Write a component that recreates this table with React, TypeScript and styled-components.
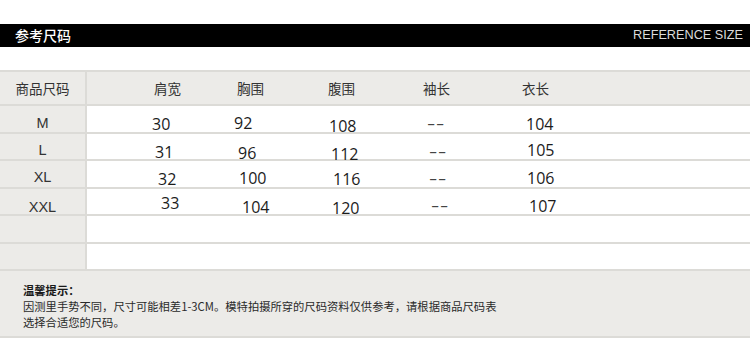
import React from 'react';
import styled, { createGlobalStyle } from 'styled-components';

const GlobalStyle = createGlobalStyle`
  body {
    margin: 0;
    background: #fff;
    font-family: "Noto Sans CJK SC", "Noto Sans", sans-serif;
  }
`;

const LINE = '#dcdbd7';
const PANEL = '#ecebe8';
const CJK = '"Noto Sans CJK SC", "Noto Sans", sans-serif';

const Page = styled.div`
  width: 750px;
  padding-top: 24px;
`;

const TitleBar = styled.div`
  height: 23px;
  background: #000;
  display: flex;
  align-items: center;
  justify-content: space-between;
  padding: 0 7px 0 15px;
`;

const TitleCn = styled.span`
  color: #fff;
  font-family: ${CJK};
  font-size: 14px;
  font-weight: 500;
  line-height: 23px;
`;

const TitleEn = styled.span`
  color: #dcdcdc;
  font-family: "Liberation Sans", Arial, sans-serif;
  font-size: 12.7px;
  line-height: 23px;
`;

const Table = styled.div`
  margin-top: 23px;
  border-top: 2px solid ${LINE};
`;

const Row = styled.div<{ $head?: boolean }>`
  display: flex;
  box-sizing: border-box;
  height: ${p => (p.$head ? '34px' : '27.5px')};
  border-bottom: 2px solid ${LINE};
  background: ${p => (p.$head ? PANEL : '#fff')};
`;

const SizeCell = styled.div<{ $dy?: number; $head?: boolean }>`
  width: 87px;
  flex: none;
  box-sizing: border-box;
  border-right: 2px solid ${LINE};
  background: ${PANEL};
  display: flex;
  align-items: center;
  justify-content: center;
  padding-top: ${p => (p.$dy || 0) * 2}px;
  color: #333;
  font-family: ${p => (p.$head ? CJK : '"Liberation Sans", Arial, sans-serif')};
  font-size: ${p => (p.$head ? '13.5px' : '14.5px')};
  line-height: 20px;
`;

const Cells = styled.div`
  flex: 1;
  display: flex;
  padding-left: 63px;
`;

const Cell = styled.div<{ $w?: number; $dx: number; $dy?: number; $head?: boolean }>`
  ${p => (p.$w ? `width: ${p.$w}px; flex: none;` : 'flex: 1;')}
  box-sizing: border-box;
  display: flex;
  align-items: center;
  padding-left: ${p => p.$dx}px;
  padding-top: ${p => (p.$dy || 0) * 2}px;
  white-space: nowrap;
  line-height: 20px;
  color: ${p => (p.$head ? '#333' : '#1c1c1c')};
  font-family: ${p => (p.$head ? CJK : '"Open Sans", "Noto Sans", sans-serif')};
  font-size: ${p => (p.$head ? '13.5px' : '16px')};
`;

const Dash = styled.span`
  display: inline-block;
  color: #444;
  letter-spacing: 0.5px;
  transform: scaleX(1.6);
  transform-origin: left center;
`;

const Notes = styled.div`
  background: ${PANEL};
  border-bottom: 2px solid ${LINE};
  padding: 11px 0 6px 23px;
  font-family: ${CJK};
  font-size: 11.3px;
  line-height: 16px;
  color: #2a2a2a;
`;

const NotesTitle = styled.div`
  font-weight: 700;
  color: #1a1a1a;
`;

const COL_WIDTHS = [82, 93, 95, 100];

const headers = [
  { label: '肩宽', dx: 4 },
  { label: '胸围', dx: 5 },
  { label: '腹围', dx: 3 },
  { label: '袖长', dx: 3 },
  { label: '衣长', dx: 2 },
];

type Val = { v: string; dx: number; dy: number };

const rows: { size: string; dy: number; cells: Val[] }[] = [
  {
    size: 'M',
    dy: 4,
    cells: [
      { v: '30', dx: 2, dy: 5 },
      { v: '92', dx: 2, dy: 4 },
      { v: '108', dx: 4, dy: 7 },
      { v: '--', dx: 7, dy: 4 },
      { v: '104', dx: 6, dy: 5 },
    ],
  },
  {
    size: 'L',
    dy: 4,
    cells: [
      { v: '31', dx: 5, dy: 6 },
      { v: '96', dx: 6, dy: 7 },
      { v: '112', dx: 6, dy: 8 },
      { v: '--', dx: 9, dy: 5 },
      { v: '105', dx: 7, dy: 4 },
    ],
  },
  {
    size: 'XL',
    dy: 3,
    cells: [
      { v: '32', dx: 8, dy: 5 },
      { v: '100', dx: 7, dy: 4 },
      { v: '116', dx: 8, dy: 5 },
      { v: '--', dx: 9, dy: 4 },
      { v: '106', dx: 7, dy: 4 },
    ],
  },
  {
    size: 'XXL',
    dy: 6,
    cells: [
      { v: '33', dx: 11, dy: 2 },
      { v: '104', dx: 10, dy: 6 },
      { v: '120', dx: 7, dy: 7 },
      { v: '--', dx: 11, dy: 4 },
      { v: '107', dx: 9, dy: 5 },
    ],
  },
];

export default function App() {
  return (
    <Page>
      <GlobalStyle />
      <TitleBar>
        <TitleCn>参考尺码</TitleCn>
        <TitleEn>REFERENCE SIZE</TitleEn>
      </TitleBar>

      <Table>
        <Row $head>
          <SizeCell $head>商品尺码</SizeCell>
          <Cells>
            {headers.map((h, i) => (
              <Cell key={h.label} $head $w={COL_WIDTHS[i]} $dx={h.dx}>
                {h.label}
              </Cell>
            ))}
          </Cells>
        </Row>

        {rows.map(r => (
          <Row key={r.size}>
            <SizeCell $dy={r.dy}>{r.size}</SizeCell>
            <Cells>
              {r.cells.map((c, i) => (
                <Cell key={i} $w={COL_WIDTHS[i]} $dx={c.dx} $dy={c.dy}>
                  {c.v === '--' ? <Dash>--</Dash> : c.v}
                </Cell>
              ))}
            </Cells>
          </Row>
        ))}

        <Row>
          <SizeCell />
        </Row>
        <Row>
          <SizeCell />
        </Row>
      </Table>

      <Notes>
        <NotesTitle>温馨提示：</NotesTitle>
        <div>因测里手势不同，尺寸可能相差1-3CM。模特拍摄所穿的尺码资料仅供参考，请根据商品尺码表</div>
        <div>选择合适您的尺码。</div>
      </Notes>
    </Page>
  );
}
